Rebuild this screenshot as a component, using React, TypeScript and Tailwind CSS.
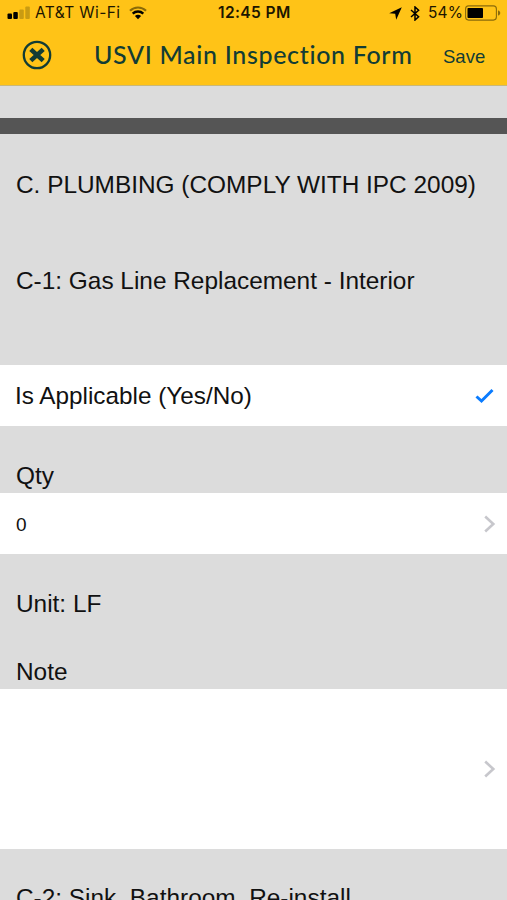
import React from 'react';

const Chevron: React.FC = () => (
    <svg width="12" height="18" viewBox="0 0 12 18" fill="none" stroke="#c7c7cc" strokeWidth="2.6">
        <path d="M1.2 1.5 L9.3 9 L1.2 16.5" />
    </svg>
);

const StatusBar: React.FC = () => (
    <div className="flex h-[26px] items-center pl-[7px] pr-[6px] font-['Inter',sans-serif] text-[15px] leading-[26px] text-[#1c1600]">
        <div className="flex w-[211px] items-center">
            <svg width="24" height="14" viewBox="0 0 24 14">
                <rect x="0.5" y="7.5" width="4.5" height="5.5" rx="1" fill="#000" />
                <rect x="6.3" y="6" width="4.5" height="7" rx="1" fill="#000" />
                <rect x="12.3" y="3.5" width="4.5" height="9.5" rx="1" fill="#c99b12" />
                <rect x="18.3" y="0.5" width="4.5" height="12.5" rx="1" fill="#c99b12" />
            </svg>
            <span className="ml-1 w-[86px] whitespace-nowrap text-[15.5px] tracking-[0.4px]">AT&amp;T Wi-Fi</span>
            <svg className="ml-2" width="18" height="14" viewBox="0 0 18 14" fill="none">
                <path d="M1 4.8 C5.5 0.4 12.5 0.4 17 4.8" stroke="#8a6a08" strokeWidth="2.2" />
                <path d="M3.7 7.6 C6.7 4.8 11.3 4.8 14.3 7.6" stroke="#000" strokeWidth="2.4" />
                <path d="M5.9 10 C7.7 8.4 10.3 8.4 12.1 10 L9 13.2 Z" fill="#000" />
            </svg>
        </div>
        <span className="w-[76px] whitespace-nowrap text-[15.5px] font-semibold tracking-[0.4px]">12:45 PM</span>
        <div className="ml-auto flex items-center">
            <svg width="13" height="13" viewBox="0 0 13 13" fill="#000">
                <path d="M12.8 0.2 L7.2 12.8 L6.2 6.8 L0.2 6.2 Z" />
            </svg>
            <svg className="ml-2" width="10" height="15" viewBox="0 0 10 15" fill="none" stroke="#000" strokeWidth="1.5">
                <path d="M1 4 L8.6 10.7 L5 14 V1 L8.6 4.3 L1 11" />
            </svg>
            <span className="ml-2 w-[35px] whitespace-nowrap text-[15.5px] tracking-[0.1px]">54%</span>
            <svg className="ml-[2px]" width="36" height="16" viewBox="0 0 36 16">
                <rect x="0.6" y="0.9" width="30.8" height="14.2" rx="3" fill="none" stroke="#8a6b0b" strokeWidth="1.1" />
                <rect x="2.5" y="3" width="15.5" height="10" rx="0.8" fill="#000" />
                <path d="M33 5.5 C36 6 36 10 33 10.5 Z" fill="#8a6b0b" />
            </svg>
        </div>
    </div>
);

const NavBar: React.FC = () => (
    <div className="flex h-[59px] items-center pb-[1px] text-[#123c35]">
        <button className="ml-[22px]" aria-label="Close">
            <svg width="30" height="30" viewBox="0 0 30 30" fill="none" stroke="currentColor">
                <circle cx="15" cy="15" r="13.2" strokeWidth="2.3" />
                <path d="M8.8 9.4 L21.2 20.6 M21.2 9.4 L8.8 20.6" strokeWidth="4.6" />
            </svg>
        </button>
        <h1 className="mb-[2px] ml-[42px] w-[320px] whitespace-nowrap font-['Lato',sans-serif] text-[25px] font-medium leading-[30px] tracking-[0.67px]">
            USVI Main Inspection Form
        </h1>
        <button className="ml-[29px] mt-1 text-[18.5px] leading-6">Save</button>
    </div>
);

const App: React.FC = () => {
    return (
        <div className="flex h-[900px] w-[507px] flex-col overflow-hidden bg-[#dcdcdc] font-['Liberation_Sans',Arial,sans-serif] text-[24.4px] leading-[30px] text-[#111]">
            <header className="h-[86px] shrink-0 border-b border-[#c9b879] bg-[#ffc317]">
                <StatusBar />
                <NavBar />
            </header>

            <div className="mt-8 h-4 shrink-0 bg-[#555]" />

            <section className="h-[231px] shrink-0 px-4 pt-9">
                <h2 className="whitespace-nowrap">C. PLUMBING (COMPLY WITH IPC 2009)</h2>
                <h3 className="mt-[66px] whitespace-nowrap">C-1: Gas Line Replacement - Interior</h3>
            </section>

            <div className="flex h-[61px] shrink-0 items-center justify-between bg-white pl-[15px] pr-[13px]">
                <span className="text-[24.3px]">Is Applicable (Yes/No)</span>
                <svg width="19" height="16" viewBox="0 0 19 16" fill="none" stroke="#0a7cff" strokeWidth="3">
                    <path d="M1.5 8.5 L6.5 13 L17.5 2" />
                </svg>
            </div>

            <div className="flex h-[67px] shrink-0 items-end px-4 pb-[2px]">Qty</div>
            <div className="flex h-[61px] shrink-0 items-center justify-between bg-white pl-4 pr-[11px]">
                <span className="pt-[2px] text-[19px]">0</span>
                <Chevron />
            </div>

            <section className="h-[135px] shrink-0 px-4 pt-[35px]">
                <p>Unit: LF</p>
                <p className="mt-[38px]">Note</p>
            </section>
            <div className="flex h-[160px] shrink-0 items-center justify-end bg-white pr-[11px]">
                <Chevron />
            </div>

            <h3 className="shrink-0 whitespace-nowrap px-4 pt-[34px]">C-2: Sink, Bathroom, Re-install</h3>
        </div>
    );
};

export default App;
